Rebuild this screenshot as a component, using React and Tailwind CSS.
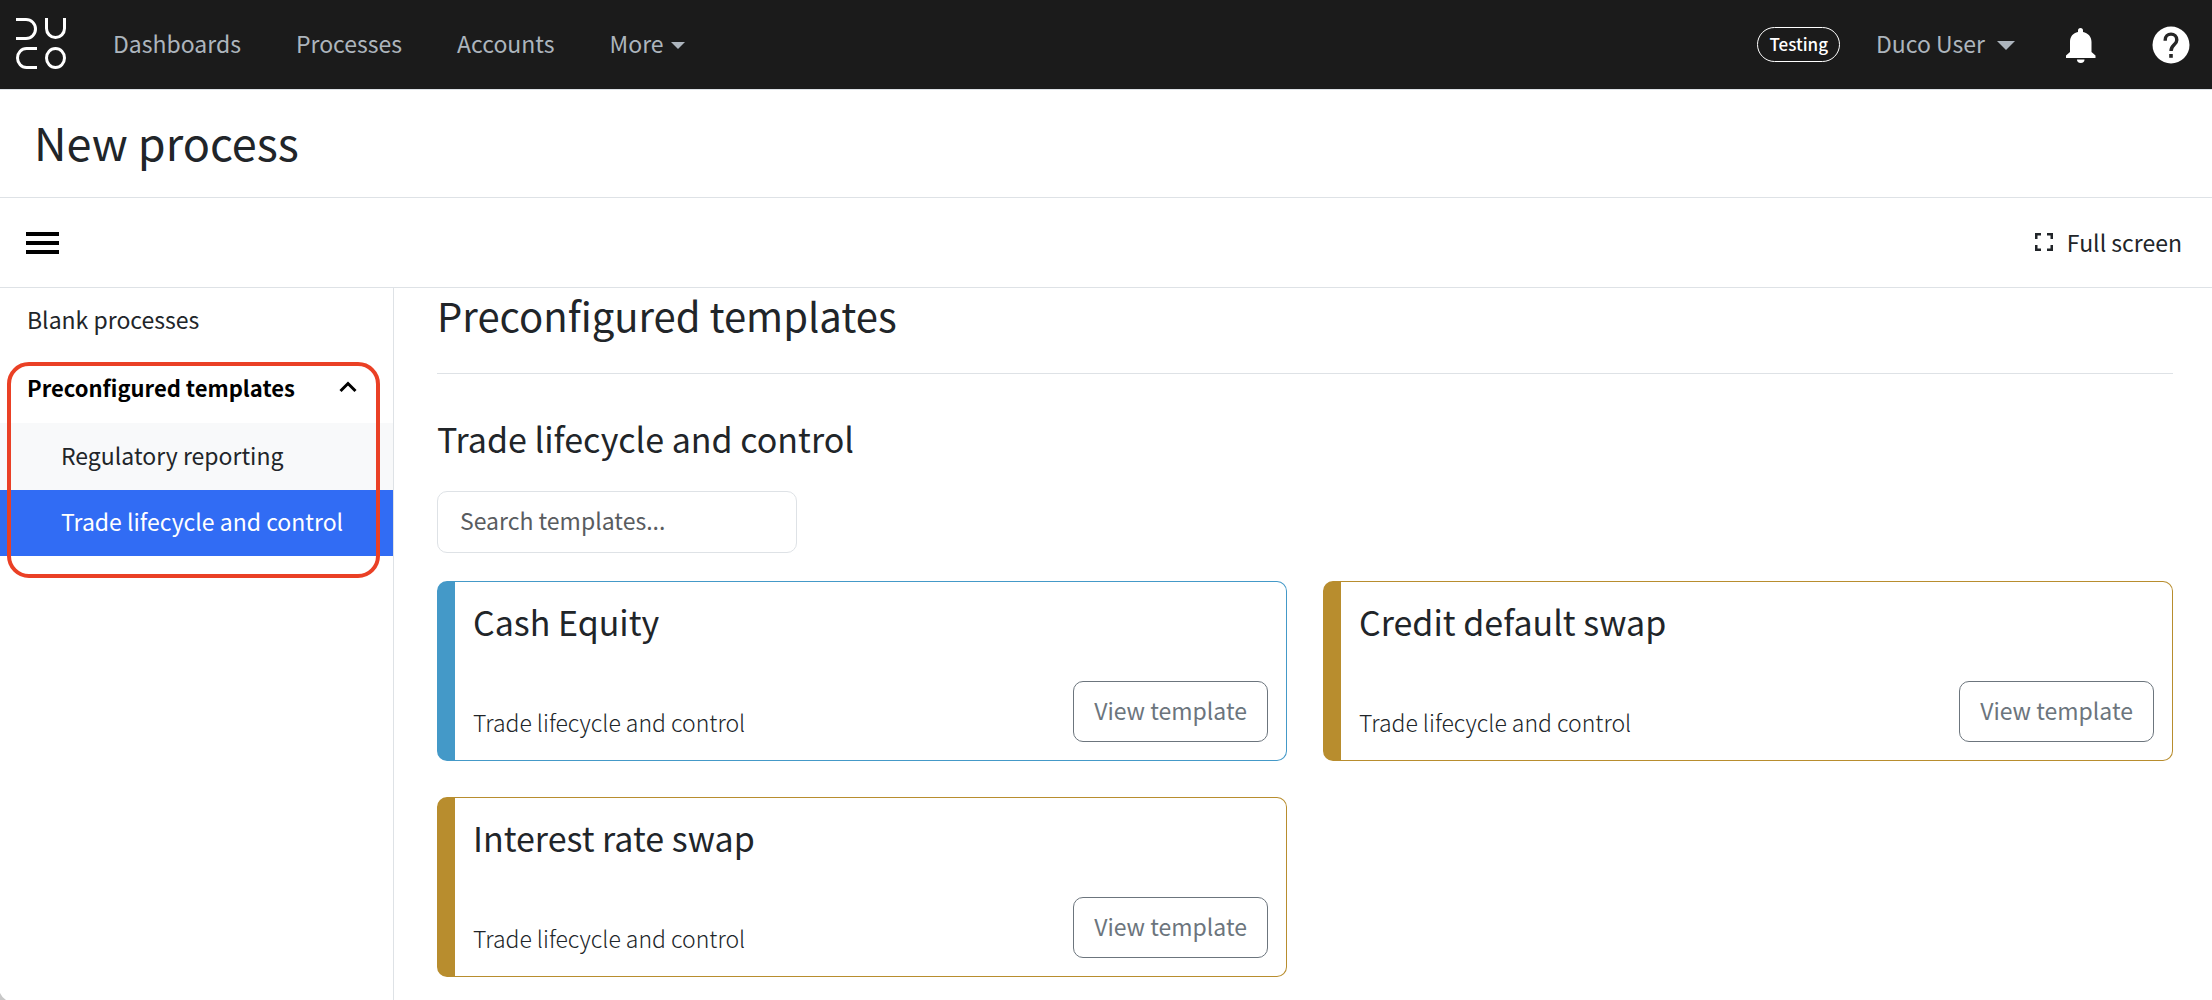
import { useState } from "react";

const NAV_LINKS = ["Dashboards", "Processes", "Accounts"];

const TEMPLATES = [
  { name: "Cash Equity", tone: "border-[#4499c8]" },
  { name: "Credit default swap", tone: "border-[#b88d2e]" },
  { name: "Interest rate swap", tone: "border-[#b88d2e]" },
];

function Logo() {
  return (
    <svg width="52" height="53" viewBox="0 0 52 53" fill="none" stroke="#fff" strokeWidth="3" aria-hidden="true">
      <path d="M1 1.500H11a9.500 9.500 0 0 1 0 19H1" />
      <path d="M31.500 0v10.500a9 9 0 0 0 18 0V0" />
      <path d="M22 30.500H11.500a9 9.500 0 0 0 0 19H22" />
      <ellipse cx="40.500" cy="40" rx="9" ry="9.500" />
    </svg>
  );
}

function Caret({ className }) {
  return (
    <svg className={className} viewBox="0 0 18 9" fill="currentColor" preserveAspectRatio="none" aria-hidden="true">
      <path d="M0 0H18L9 9Z" />
    </svg>
  );
}

function Header() {
  return (
    <header className="flex h-[89px] items-center bg-[#1b1b1b] text-[23px] leading-8 text-[#adb5bd]">
      <a href="#home" aria-label="Duco home" className="ml-[15px]">
        <Logo />
      </a>
      <nav className="ml-[46px] flex items-center gap-[55px] pb-1">
        {NAV_LINKS.map((label) => (
          <a key={label} href={"#" + label.toLowerCase()}>{label}</a>
        ))}
        <button type="button" className="flex items-center gap-[7px]">
          More
          <Caret className="mt-1.5 h-[7px] w-[14px]" />
        </button>
      </nav>
      <div className="ml-auto flex items-center pr-[22px]">
        <span className="mr-9 rounded-full border border-white px-[11px] pt-1 pb-[5px] text-[17px] leading-6 font-medium text-white">
          Testing
        </span>
        <button type="button" className="mr-[51px] flex items-center gap-3 pb-1">
          Duco User
          <Caret className="mt-1.5 h-[9px] w-[18px]" />
        </button>
        <button type="button" aria-label="Notifications" className="mr-14">
          <svg width="30" height="36" viewBox="0 0 30 36" fill="#fff" aria-hidden="true">
            <path d="M14.500 1a2.500 2.500 0 0 1 2.500 2.500V5c5 1 8.500 4.500 8.500 10v10l4 3.500V31H0v-2.500L4 25V15C4 9.500 7 6 12 5V3.500A2.500 2.500 0 0 1 14.500 1Z" />
            <path d="M11 32.500h7.500a3.750 3.500 0 0 1-7.500 0Z" />
          </svg>
        </button>
        <button type="button" aria-label="Help">
          <svg width="38" height="38" viewBox="0 0 38 38" aria-hidden="true">
            <circle cx="19" cy="19" r="18.500" fill="#fff" />
            <path d="M13.200 14.800v-.9a5.800 5.800 0 0 1 11.600 0c0 5-5.800 5-5.800 11" fill="none" stroke="#262626" strokeWidth="3.400" />
            <path d="M17.200 28h3.600v3.800h-3.600z" fill="#262626" />
          </svg>
        </button>
      </div>
    </header>
  );
}

function Sidebar() {
  return (
    <aside className="relative w-[394px] shrink-0 border-r border-[#dee2e6]">
      <nav className="flex flex-col">
        <a href="#blank" className="flex h-[66px] items-center px-[27px] pb-1">Blank processes</a>
        <button type="button" aria-expanded="true" className="flex h-[69px] items-center justify-between pr-9 pb-1 pl-[27px] text-[22px] font-bold text-black">
          Preconfigured templates
          <svg width="18" height="12" viewBox="0 0 18 12" fill="none" stroke="currentColor" strokeWidth="3" aria-hidden="true">
            <path d="M1.500 10L9 2.500L16.500 10" />
          </svg>
        </button>
        <a href="#regulatory" className="flex h-[67px] items-center bg-[#f8f9fa] pb-1 pl-[61px]">Regulatory reporting</a>
        <a href="#trade" aria-current="page" className="flex h-[66px] items-center bg-[#316cf4] pb-1 pl-[61px] text-white">
          Trade lifecycle and control
        </a>
      </nav>
      <div className="pointer-events-none absolute top-[74px] left-[7px] h-[216px] w-[373px] rounded-[22px] border-4 border-[#ea4025]" />
    </aside>
  );
}

function TemplateCard({ name, tone }) {
  return (
    <article className={"flex h-[180px] flex-col justify-between rounded-[10px] border border-l-[18px] p-[18px] " + tone}>
      <h4 className="text-[34px] leading-[44px]">{name}</h4>
      <div className="flex items-end justify-between">
        <p className="pb-1 leading-8 font-light">Trade lifecycle and control</p>
        <button type="button" className="h-[61px] rounded-[10px] border border-[#6c757d] px-5 pb-1 text-[#6c757d]">
          View template
        </button>
      </div>
    </article>
  );
}

export default function App() {
  const [query, setQuery] = useState("");
  const shown = TEMPLATES.filter((t) => t.name.toLowerCase().includes(query.toLowerCase()));
  return (
    <div className="relative flex min-h-screen flex-col overflow-hidden bg-white font-['Noto_Sans_CJK_SC','Noto_Sans',sans-serif] text-[23px] leading-8 text-[#212529]">
      <Header />
      <div className="border-y border-[#dee2e6] px-[34px] pt-5 pb-6">
        <h1 className="text-[45px] leading-[63px]">New process</h1>
      </div>
      <div className="flex h-[90px] items-center justify-between border-b border-[#dee2e6] pr-[30px] pl-[26px]">
        <button type="button" aria-label="Toggle menu">
          <svg width="33" height="24" viewBox="0 0 33 24" fill="#000" aria-hidden="true">
            <path d="M0 1h33v4H0zM0 10h33v4H0zM0 19h33v4H0z" />
          </svg>
        </button>
        <button type="button" className="flex items-center gap-[14px] pb-0.5">
          <svg width="18" height="18" viewBox="0 0 18 18" fill="none" stroke="currentColor" strokeWidth="2.500" aria-hidden="true">
            <path d="M1.250 6V1.250H6M12 1.250h4.750V6M16.750 12v4.750H12M6 16.750H1.250V12" />
          </svg>
          Full screen
        </button>
      </div>
      <div className="flex grow">
        <Sidebar />
        <main className="min-w-0 grow pr-[39px] pl-[43px]">
          <h2 className="border-b border-[#dee2e6] pb-[30px] text-[40px] leading-[55px]">Preconfigured templates</h2>
          <h3 className="mt-[41px] text-[34px] leading-[48px]">Trade lifecycle and control</h3>
          <input
            type="search"
            aria-label="Search templates"
            placeholder="Search templates..."
            value={query}
            onChange={(e) => setQuery(e.target.value)}
            className="mt-7 block h-[62px] w-[360px] rounded-[10px] border border-[#dee2e6] px-[22px] pb-1 placeholder:text-[#595c5f]"
          />
          <div className="mt-7 grid grid-cols-2 gap-9">
            {shown.map((t) => (
              <TemplateCard key={t.name} name={t.name} tone={t.tone} />
            ))}
          </div>
        </main>
      </div>
      <svg className="absolute bottom-0 left-0" width="6" height="7" viewBox="0 0 6 7" fill="#c8c8c8" aria-hidden="true">
        <path d="M0 0Q2 4.500 6 7H0Z" />
      </svg>
    </div>
  );
}
